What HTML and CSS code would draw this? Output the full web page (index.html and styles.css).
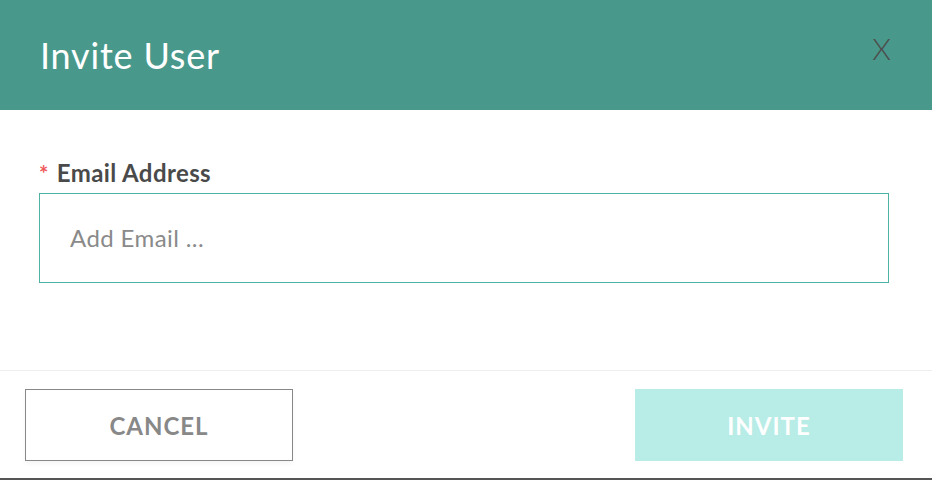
FILE: index.html
```html
<!DOCTYPE html>
<html lang="en">
<head>
  <meta charset="UTF-8" />
  <title>Invite User</title>
  <link rel="stylesheet" href="styles.css">
</head>
<body>
  <div class="modal">
    <div class="modal-header">
      <h2>Invite User</h2>
      <span class="close">X</span>
    </div>

    <div class="modal-body">
      <label for="email"><span class="req">*</span>Email Address</label>
      <input type="text" id="email" placeholder="Add Email ...">
    </div>

    <div class="modal-footer">
      <button class="btn btn-cancel">Cancel</button>
      <button class="btn btn-invite" disabled>Invite</button>
    </div>
  </div>
</body>
</html>
```

FILE: styles.css
```css
body { font-family: Lato, 'Open Sans', sans-serif; margin: 0; background: #fff; }
.modal { width: 932px; height: 478px; border-bottom: 2px solid #555; box-sizing: content-box; display: flex; flex-direction: column; }
.modal-header {
  height: 110px; background: #48998b; padding: 0 41px 0 40px; display: flex;
  justify-content: space-between; align-items: center; box-sizing: border-box;
}
.modal-header h2 { margin: 0 0 1px; color: #fff; font-weight: 400; font-size: 36px; letter-spacing: 0.8px; }
.close { color: #4d4d4d; font-size: 30px; font-weight: 300; margin-top: -15px; cursor: pointer; }
.modal-body { height: 260px; padding: 48px 43px 0 39px; box-sizing: border-box; }
.modal-body label { display: block; font-size: 24px; font-weight: bold; color: #4a4a4a; margin-bottom: 6px; letter-spacing: 0.4px; }
.req { color: #ee5a5a; font-size: 22px; margin-right: 8px; }
.modal-body input {
  width: 100%; height: 90px; box-sizing: border-box; border: 1px solid #4db3a5; padding: 0 30px 2px;
  font-family: inherit; font-size: 24px; letter-spacing: 0.4px; color: #444; outline: none;
}
.modal-body input::placeholder { color: #8a8a8a; }
.modal-footer {
  flex: 1; border-top: 1px solid #eee; padding: 18px 29px 0 25px; display: flex;
  justify-content: space-between; align-items: flex-start;
}
.btn {
  width: 268px; height: 72px; font-family: inherit; font-size: 24px; font-weight: bold;
  letter-spacing: 1px; text-transform: uppercase; cursor: pointer;
}
.btn-cancel { background: #fff; border: 1px solid #888; color: #888; box-shadow: 0 3px 4px rgba(0,0,0,0.04); }
.btn-invite { background: #b8ece6; border: none; color: #fff; }
```
